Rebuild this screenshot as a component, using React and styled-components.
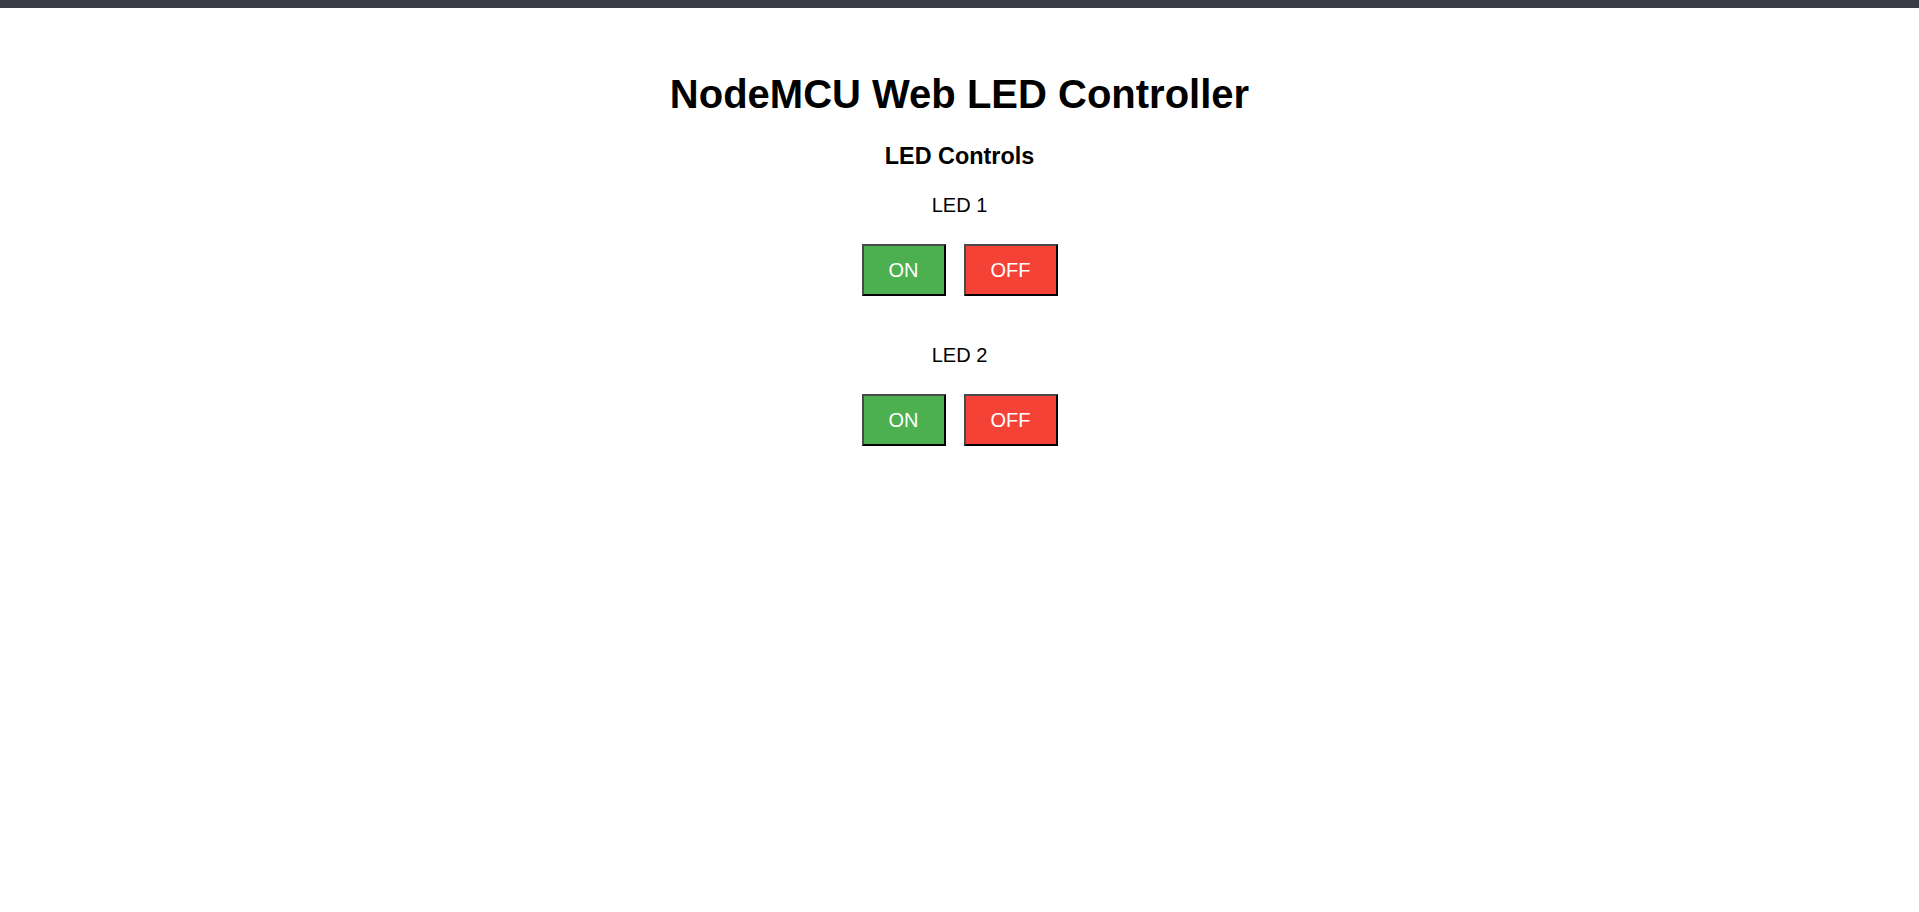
import React from 'react'
import styled, { createGlobalStyle } from 'styled-components'

const leds = [
    { id: 1, name: 'LED 1' },
    { id: 2, name: 'LED 2' },
]

const App = () => {
    return (
        <>
            <GlobalStyle />
            <StyledTopBar />
            <StyledPage>
                <StyledTitle>NodeMCU Web LED Controller</StyledTitle>
                <StyledSubtitle>LED Controls</StyledSubtitle>
                <StyledSections>
                    {leds.map((led) => (
                        <StyledSection key={led.id}>
                            <StyledLabel>{led.name}</StyledLabel>
                            <StyledButtonRow>
                                <StyledButton $variant="on">ON</StyledButton>
                                <StyledButton $variant="off">OFF</StyledButton>
                            </StyledButtonRow>
                        </StyledSection>
                    ))}
                </StyledSections>
            </StyledPage>
        </>
    )
}

const GlobalStyle = createGlobalStyle`
    html, body {
        margin: 0;
        padding: 0;
        background: #ffffff;
        color: #000000;
        font-family: "Liberation Sans", Arial, sans-serif;
    }
`

const StyledTopBar = styled.div`
    height: 8px;
    background: #3a3d46;
`

const StyledPage = styled.div`
    display: flex;
    flex-direction: column;
    align-items: center;
    padding-top: 63px;
    text-align: center;
`

const StyledTitle = styled.h1`
    margin: 0;
    font-size: 40px;
    line-height: 46px;
    font-weight: bold;
`

const StyledSubtitle = styled.h3`
    margin: 26px 0 0;
    font-size: 23.4px;
    line-height: 27px;
    font-weight: bold;
`

const StyledSections = styled.div`
    display: flex;
    flex-direction: column;
    align-items: center;
    gap: 48px;
    margin-top: 24px;
`

const StyledSection = styled.div`
    display: flex;
    flex-direction: column;
    align-items: center;
`

const StyledLabel = styled.p`
    margin: 0 0 27px;
    font-size: 20px;
    line-height: 23px;
`

const StyledButtonRow = styled.div`
    display: flex;
    gap: 18px;
`

const StyledButton = styled.button`
    height: 52px;
    padding: 0 25px;
    border: 2px solid;
    border-color: #4a4a4a #000000 #000000 #4a4a4a;
    background: ${(props) => (props.$variant === 'on' ? '#4caf50' : '#f44336')};
    color: #ffffff;
    font-family: "Liberation Sans", Arial, sans-serif;
    font-size: 20px;
    line-height: 23px;
    cursor: pointer;
`

export default App
